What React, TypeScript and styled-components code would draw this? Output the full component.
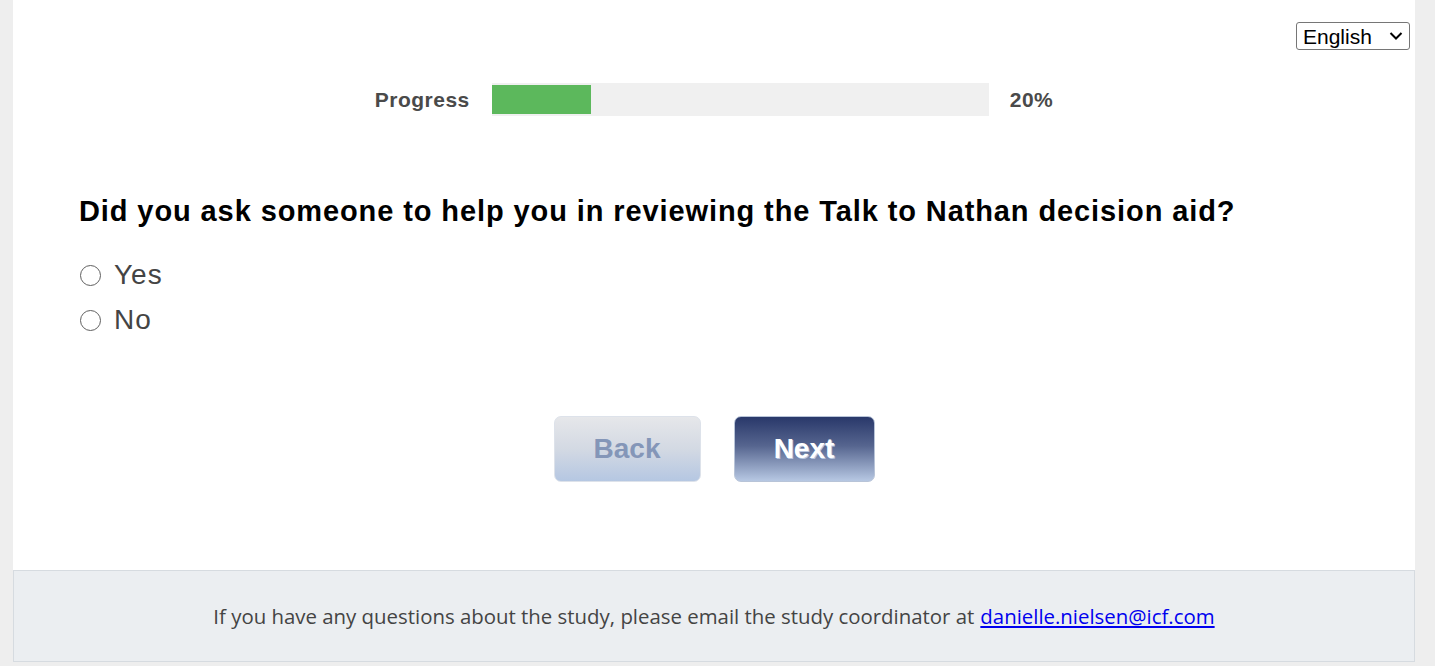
import React from "react";
import styled, { createGlobalStyle } from "styled-components";

const GlobalStyle = createGlobalStyle`
    body {
        margin: 0;
        background-color: #eeeeee;
        font-family: "Liberation Sans", Arial, sans-serif;
    }
`;

const Page = styled.div`
    margin-left: 13px;
    width: 1402px;
    min-height: 662px;
    background-color: #ffffff;
    display: flex;
    flex-direction: column;
`;

const Main = styled.div`
    flex: 1;
    display: flex;
    flex-direction: column;
    padding: 0 66px;
`;

const TopBar = styled.div`
    display: flex;
    justify-content: flex-end;
    padding-top: 22px;
    margin-right: -61px;
`;

const SelectWrap = styled.span`
    position: relative;
    display: inline-block;
`;

const LangSelect = styled.select`
    appearance: none;
    font-family: "Liberation Sans", Arial, sans-serif;
    font-size: 21px;
    height: 28px;
    width: 114px;
    padding: 0 24px 0 6px;
    border: 1px solid #767676;
    border-radius: 3px;
    background: #ffffff;
    color: #000000;
`;

const Chevron = styled.svg`
    position: absolute;
    right: 7px;
    top: 9px;
    width: 14px;
    height: 10px;
    pointer-events: none;
`;

const ProgressRow = styled.div`
    display: flex;
    align-items: center;
    justify-content: center;
    gap: 21px;
    margin-top: 33px;
`;

const ProgressLabel = styled.span`
    font-size: 21px;
    letter-spacing: 0.5px;
    font-weight: bold;
    color: #4a4a4a;
`;

const Track = styled.div`
    width: 497px;
    height: 33px;
    margin-left: 1px;
    background-color: #f0f0f0;
    display: flex;
    align-items: center;
`;

const Fill = styled.div`
    height: 29px;
    background-color: #5cb85c;
`;

const Question = styled.h2`
    margin: 79px 0 0;
    font-size: 29px;
    letter-spacing: 0.9px;
    font-weight: bold;
    color: #000000;
`;

const Options = styled.div`
    display: flex;
    flex-direction: column;
    gap: 13px;
    margin-top: 31px;
`;

const Option = styled.label`
    display: flex;
    align-items: center;
    gap: 13px;
    font-size: 28px;
    letter-spacing: 1px;
    color: #444444;
    height: 32px;
`;

const Radio = styled.span`
    width: 21px;
    height: 21px;
    margin-left: 1px;
    box-sizing: border-box;
    border: 1.5px solid #5f5f5f;
    border-radius: 50%;
    background: #ffffff;
`;

const Buttons = styled.div`
    display: flex;
    justify-content: center;
    gap: 33px;
    margin-top: 80px;
    margin-bottom: 88px;
`;

const NavButton = styled.button<{ $primary?: boolean }>`
    width: ${(p) => (p.$primary ? "141px" : "147px")};
    height: 66px;
    border-radius: 7px;
    border: 1px solid ${(p) => (p.$primary ? "#b8c4d8" : "#dde2ea")};
    font-family: "Liberation Sans", Arial, sans-serif;
    font-size: 28px;
    font-weight: bold;
    color: ${(p) => (p.$primary ? "#ffffff" : "#8496b8")};
    text-shadow: ${(p) => (p.$primary ? "1px 1px 0 #b9c6e0" : "none")};
    background: ${(p) =>
        p.$primary
            ? "linear-gradient(to bottom, #29386a 0%, #56658f 45%, #b7c8e3 100%)"
            : "linear-gradient(to bottom, #e6e7ea 0%, #d3d9e3 50%, #b5c7e2 100%)"};
    cursor: pointer;
`;

const Footer = styled.footer`
    height: 92px;
    box-sizing: border-box;
    background-color: #ebeef1;
    border: 1px solid #d6dbe0;
    display: flex;
    align-items: center;
    justify-content: center;
    font-family: "Open Sans", "Noto Sans", sans-serif;
    font-size: 20.4px;
    color: #444444;
`;

const MailLink = styled.a`
    color: #0000ee;
    margin-left: 6px;
`;

const App: React.FC = () => {
    const progress = 20;
    return (
        <>
            <GlobalStyle />
            <Page>
                <Main>
                    <TopBar>
                        <SelectWrap>
                            <LangSelect defaultValue="en">
                                <option value="en">English</option>
                                <option value="es">Español</option>
                            </LangSelect>
                            <Chevron viewBox="0 0 14 10">
                                <path d="M1.5 2 L7 7.5 L12.5 2" fill="none" stroke="#000" strokeWidth="2" />
                            </Chevron>
                        </SelectWrap>
                    </TopBar>
                    <ProgressRow>
                        <ProgressLabel>Progress</ProgressLabel>
                        <Track>
                            <Fill style={{ width: `${progress}%` }} />
                        </Track>
                        <ProgressLabel>{progress}%</ProgressLabel>
                    </ProgressRow>
                    <Question>Did you ask someone to help you in reviewing the Talk to Nathan decision aid?</Question>
                    <Options>
                        <Option>
                            <Radio />
                            Yes
                        </Option>
                        <Option>
                            <Radio />
                            No
                        </Option>
                    </Options>
                    <Buttons>
                        <NavButton>Back</NavButton>
                        <NavButton $primary>Next</NavButton>
                    </Buttons>
                </Main>
                <Footer>
                    If you have any questions about the study, please email the study coordinator at
                    <MailLink href="mailto:danielle.nielsen@icf.com">danielle.nielsen@icf.com</MailLink>
                </Footer>
            </Page>
        </>
    );
};

export default App;
